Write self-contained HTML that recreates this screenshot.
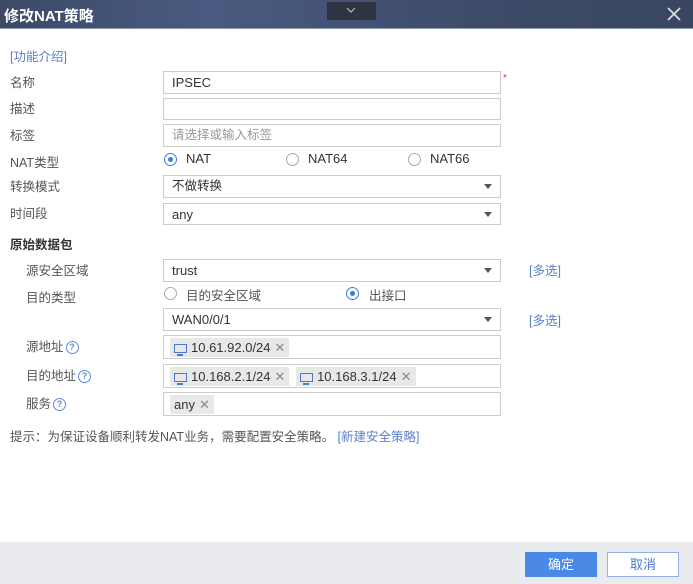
<!DOCTYPE html>
<html><head><meta charset="utf-8"><style>
*{margin:0;padding:0;box-sizing:border-box}
body{width:693px;height:584px;position:relative;background:#fff;font-family:"Liberation Sans","Noto Sans CJK SC",sans-serif;font-size:13px;color:#333;overflow:hidden}
.a{position:absolute}
.hdr{left:0;top:0;width:693px;height:29px;background:linear-gradient(90deg,#3c4a68,#4a5a80 30%,#3e4b68 70%,#394662);border-bottom:1px solid #8899b0}
.lbl{color:#555;font-size:12.5px}
.in{left:163px;width:338px;border:1px solid #ccc;background:#fff;padding-left:8px;line-height:21px;font-size:13px}
.dd::after{content:"";position:absolute;right:8px;top:8px;border:4px solid transparent;border-top:5px solid #555}
.tag{display:inline-block;background:#e8e8e8;height:19px;line-height:19px;margin:2px 0 0 2px;padding:0 4px;font-size:13px;vertical-align:top}
.x{color:#888;margin-left:4px}
.q{display:inline-block;width:13px;height:13px;border:1.5px solid #5b8ed8;border-radius:50%;color:#5b8ed8;font-size:9px;line-height:10px;text-align:center;font-weight:bold;vertical-align:1px;margin-left:2px}
.r{width:13px;height:13px;border:1px solid #aaa;border-radius:50%}
.r.on{border-color:#3a7de0}
.r.on::after{content:"";position:absolute;left:3px;top:3px;width:5px;height:5px;border-radius:50%;background:#3a7de0}
.lk{color:#5b7fc8;font-size:12.5px}
.mon{display:inline-block;width:13px;height:9px;border:1.5px solid #4a7ad0;margin-right:4px;position:relative;vertical-align:-1px}
.mon::after{content:"";position:absolute;left:2px;top:9px;width:6px;height:2px;background:#4a7ad0}
</style></head><body>
<div class="a hdr"></div>
<div class="a" style="left:4px;top:5px;color:#fff;font-size:15px;font-weight:bold">修改NAT策略</div>
<div class="a" style="left:327px;top:2px;width:49px;height:18px;background:#2f3442"></div>
<svg class="a" style="left:346px;top:7px" width="10" height="6"><path d="M1 1L5 5L9 1" stroke="#bbb" fill="none" stroke-width="1.2"/></svg>
<svg class="a" style="left:667px;top:7px" width="14" height="14"><path d="M1 1L13 13M13 1L1 13" stroke="#ddd" stroke-width="1.8"/></svg>
<div class="a lk" style="left:10px;top:46px">[功能介绍]</div>

<div class="a lbl" style="left:10px;top:72px">名称</div>
<div class="a in" style="top:71px;height:23px">IPSEC</div>
<div class="a" style="left:503px;top:73px;color:#e33;font-size:10px">*</div>
<div class="a lbl" style="left:10px;top:98px">描述</div>
<div class="a in" style="top:98px;height:22px"></div>
<div class="a lbl" style="left:10px;top:125px">标签</div>
<div class="a in" style="top:124px;height:23px;color:#999;font-size:12.5px">请选择或输入标签</div>
<div class="a lbl" style="left:10px;top:152px">NAT类型</div>
<div class="a r on" style="left:164px;top:153px"></div><div class="a" style="left:186px;top:151px">NAT</div>
<div class="a r" style="left:286px;top:153px"></div><div class="a" style="left:308px;top:151px">NAT64</div>
<div class="a r" style="left:408px;top:153px"></div><div class="a" style="left:430px;top:151px">NAT66</div>
<div class="a lbl" style="left:10px;top:176px">转换模式</div>
<div class="a in dd" style="top:175px;height:23px;font-size:12.5px">不做转换</div>
<div class="a lbl" style="left:10px;top:203px">时间段</div>
<div class="a in dd" style="top:203px;height:22px">any</div>
<div class="a" style="left:10px;top:234px;font-weight:bold;font-size:12.5px">原始数据包</div>
<div class="a lbl" style="left:26px;top:260px">源安全区域</div>
<div class="a in dd" style="top:259px;height:23px">trust</div>
<div class="a lk" style="left:529px;top:260px">[多选]</div>
<div class="a lbl" style="left:26px;top:287px">目的类型</div>
<div class="a r" style="left:164px;top:287px"></div><div class="a lbl" style="left:186px;top:285px">目的安全区域</div>
<div class="a r on" style="left:346px;top:287px"></div><div class="a lbl" style="left:369px;top:285px">出接口</div>
<div class="a in dd" style="top:308px;height:23px">WAN0/0/1</div>
<div class="a lk" style="left:529px;top:310px">[多选]</div>
<div class="a lbl" style="left:26px;top:336px">源地址<span class="q">?</span></div>
<div class="a in" style="top:335px;height:24px;padding-left:4px"><span class="tag"><span class="mon"></span>10.61.92.0/24<span class="x">✕</span></span></div>
<div class="a lbl" style="left:26px;top:365px">目的地址<span class="q">?</span></div>
<div class="a in" style="top:364px;height:24px;padding-left:4px"><span class="tag"><span class="mon"></span>10.168.2.1/24<span class="x">✕</span></span> <span class="tag" style="margin-left:3px"><span class="mon"></span>10.168.3.1/24<span class="x">✕</span></span></div>
<div class="a lbl" style="left:26px;top:393px">服务<span class="q">?</span></div>
<div class="a in" style="top:392px;height:24px;padding-left:4px"><span class="tag">any<span class="x">✕</span></span></div>
<div class="a lbl" style="left:10px;top:426px">提示：为保证设备顺利转发NAT业务，需要配置安全策略。 <span class="lk">[新建安全策略]</span></div>

<div class="a" style="left:0;top:542px;width:693px;height:42px;background:#e9ebee"></div>
<div class="a" style="left:525px;top:552px;width:72px;height:25px;background:#4a8ae6;color:#fff;text-align:center;line-height:25px">确定</div>
<div class="a" style="left:607px;top:552px;width:72px;height:25px;background:#fff;border:1px solid #8fb1e8;color:#4a7ad0;text-align:center;line-height:23px">取消</div>
</body></html>
